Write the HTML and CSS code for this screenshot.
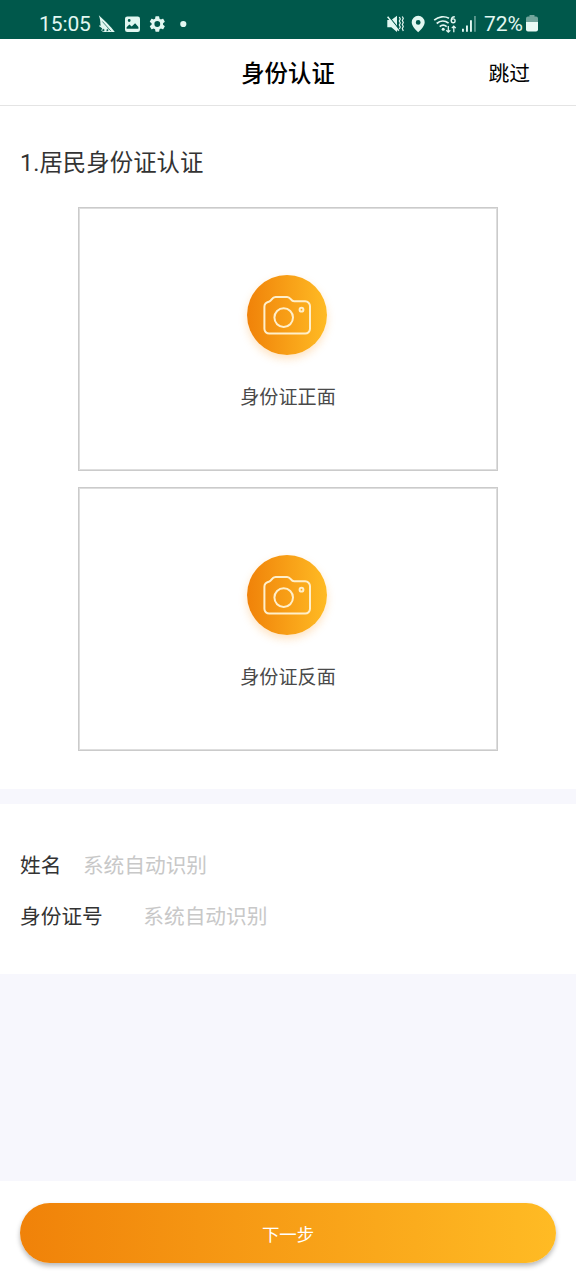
FILE: index.html
```html
<!DOCTYPE html>
<html lang="zh-CN">
<head>
<meta charset="utf-8">
<meta name="viewport" content="width=device-width, initial-scale=1">
<title>身份认证</title>
<link rel="stylesheet" href="styles.css">
</head>
<body>
<div class="screen">
  <div class="status">
    <span class="clock">15:05</span>
    <svg class="icons-left" width="92" height="20" viewBox="98 14 92 20" fill="#e2f7f1">
      <path d="M98.800 15.200c1.300 3.600 1.700 6.200 1.600 9l1.600 4.400 2 3.400h10.800l-3.600-4.600-5.200-5.400z"/>
      <path d="M102.400 21.500l8.600 9.700" stroke="#00584b" stroke-width=".7"/>
      <path d="M99.500 25.600l3.600 2.400" stroke="#e2f7f1" stroke-width="1.400"/>
      <path d="M101.600 30.200c1-2 2.800-2 3.400 0-1.200 1.800-2.400 1.800-3.400 0zm4.400 0c1-2 2.600-1.600 2.800 0-.8 1.700-2.400 1.700-2.800 0z" fill="#00584b" stroke="#e2f7f1" stroke-width=".8"/>
      <path fill-rule="evenodd" d="M127.300 16.500h10.400a2.300 2.300 0 0 1 2.300 2.300v10.900a2.300 2.300 0 0 1-2.300 2.300h-10.400a2.300 2.300 0 0 1-2.300-2.300V18.800a2.300 2.300 0 0 1 2.300-2.300zM126.600 28.800h11.800v-1.900l-3.300-3.700-3.400 3.200-2.300-1.900-2.800 2.700zM129.200 19.100a1.400 1.400 0 1 0 0 2.800 1.400 1.400 0 0 0 0-2.800z"/>
      <g transform="translate(147.700 14.400) scale(.8)">
        <path d="M19.140 12.940c.04-.3.060-.61.060-.94s-.02-.64-.07-.94l2.030-1.580a.5.5 0 0 0 .12-.61l-1.920-3.320a.49.49 0 0 0-.59-.22l-2.390.96a7 7 0 0 0-1.620-.94l-.36-2.540a.48.48 0 0 0-.48-.41h-3.840a.47.47 0 0 0-.47.41l-.36 2.540c-.59.24-1.130.57-1.620.94l-2.390-.96a.47.47 0 0 0-.59.22L2.740 8.870a.47.47 0 0 0 .12.61l2.030 1.580a6 6 0 0 0 0 1.880l-2.030 1.580a.5.5 0 0 0-.12.61l1.920 3.320c.12.22.37.29.59.22l2.390-.96c.5.38 1.030.7 1.620.94l.36 2.540c.05.24.24.41.48.41h3.840c.24 0 .44-.17.47-.41l.36-2.540a7 7 0 0 0 1.620-.94l2.390.96c.22.080.47 0 .59-.22l1.920-3.320a.47.47 0 0 0-.12-.61zM12 15.600a3.600 3.600 0 1 1 0-7.200 3.600 3.600 0 0 1 0 7.200z"/>
      </g>
      <circle cx="183.300" cy="24" r="3.100"/>
    </svg>
    <svg class="icons-right" width="92" height="20" viewBox="386 14 92 20" fill="#e2f7f1">
      <path d="M387.300 20h4l5.700-4.300v16.200l-5.700-4.600h-4z"/>
      <path d="M388.600 16.200l10.600 13.200" stroke="#00584b" stroke-width="1.200"/>
      <path d="M387.600 16.800l11.200 14" stroke="#e2f7f1" stroke-width="1.500"/>
      <path d="M399.300 17l1 2-1 2 1 2-1 2 1 2-1 2M402.300 16.500l1 2-1 2 1 2-1 2 1 2-1 2 1 2.500" fill="none" stroke="#e2f7f1" stroke-width="1.200"/>
      <path fill-rule="evenodd" d="M418.200 15.800a6.500 6.500 0 0 0-6.500 6.500c0 4.500 6.500 10 6.500 10s6.500-5.500 6.500-10a6.500 6.500 0 0 0-6.500-6.500zm0 4.200a2.400 2.400 0 1 1 0 4.800 2.400 2.400 0 0 1 0-4.800z"/>
      <g fill="none" stroke="#e2f7f1" stroke-width="1.700">
        <path d="M434.200 20.200c4.500-4 10.500-4.400 14.800-1.900M436.700 23.500c3.600-3.200 8.300-3.200 11.900-.3M439.700 26.600c2.200-1.900 4.800-1.900 7 0"/>
        <path d="M448.300 26v6.200m-2-2 2 2 2-2M453.800 32.300v-6.200m-2 2 2-2 2 2" stroke-width="1.300"/>
        <path d="M454.800 16.700c-2.500 0-3.500 1.500-3.500 3.700" stroke-width="1.400"/>
        <circle cx="453.200" cy="20.800" r="1.900" stroke-width="1.400"/>
      </g>
      <circle cx="443.200" cy="29.300" r="1.500"/>
      <path d="M462 28.800h1.900v3H462zM466 25.500h1.900v6.300H466zM470 20.300h1.900v11.500H470z"/>
      <path opacity=".4" d="M474 16h1.900v15.800H474z"/>
    </svg>
    <span class="percent">72%</span>
    <svg class="battery" width="12" height="18" viewBox="0 0 12 18">
      <path fill="#72a59c" d="M3.500 0h5v1.500H10a2 2 0 0 1 2 2V8H0V3.500a2 2 0 0 1 2-2h1.500z"/>
      <path fill="#e9faf5" d="M0 7h12v7.500a2 2 0 0 1-2 2H2a2 2 0 0 1-2-2z"/>
    </svg>
  </div>
  <header class="header">
    <h1 class="title">身份认证</h1>
    <a class="skip">跳过</a>
  </header>
  <main class="upload">
    <h2 class="heading">1.居民身份证认证</h2>
    <div class="card">
      <span class="camera">
        <svg width="80" height="80" viewBox="0 0 80 80" fill="none" stroke="#ffefca" stroke-width="2">
          <path d="M22.300 26.500C25 25.500 24.800 22 28.500 22h11.700c3.800 0 3.300 4.300 7 4.300h11a4.800 4.800 0 0 1 4.800 4.800v22.700a4.800 4.800 0 0 1-4.800 4.800h-36a4.800 4.800 0 0 1-4.800-4.800V31.700c0-2.900 1.700-4.400 4.900-5.200z"/>
          <circle cx="36.700" cy="42.600" r="9.300"/>
          <circle cx="54.500" cy="34.700" r="1.900"/>
        </svg>
      </span>
      <span class="caption">身份证正面</span>
    </div>
    <div class="card">
      <span class="camera">
        <svg width="80" height="80" viewBox="0 0 80 80" fill="none" stroke="#ffefca" stroke-width="2">
          <path d="M22.300 26.500C25 25.500 24.800 22 28.500 22h11.700c3.800 0 3.300 4.300 7 4.300h11a4.800 4.800 0 0 1 4.800 4.800v22.700a4.800 4.800 0 0 1-4.800 4.800h-36a4.800 4.800 0 0 1-4.800-4.800V31.700c0-2.900 1.700-4.400 4.900-5.200z"/>
          <circle cx="36.700" cy="42.600" r="9.300"/>
          <circle cx="54.500" cy="34.700" r="1.900"/>
        </svg>
      </span>
      <span class="caption">身份证反面</span>
    </div>
  </main>
  <section class="form">
    <div class="row"><span class="label">姓名</span><span class="placeholder">系统自动识别</span></div>
    <div class="row row-id"><span class="label">身份证号</span><span class="placeholder">系统自动识别</span></div>
  </section>
  <footer class="footer">
    <button class="next">下一步</button>
  </footer>
</div>
</body>
</html>
```

FILE: styles.css
```css
* { box-sizing: border-box; }
body {
  margin: 0;
  font-family: Roboto, "Noto Sans CJK SC", sans-serif;
  color: #333;
}
.screen {
  height: 1280px;
  display: flex;
  flex-direction: column;
  background: #f7f7fd;
  overflow: hidden;
}
.status {
  height: 39px;
  flex: none;
  display: flex;
  align-items: center;
  padding: 9px 38px 0 39px;
  background: #00584b;
  color: #e2f7f1;
  font-size: 21px;
  line-height: 30px;
}
.clock { width: 59px; letter-spacing: -0.1px; }
.icons-right { margin-left: auto; }
.percent { margin-left: 6px; width: 42px; }
.battery { flex: none; }
.header {
  height: 67px;
  flex: none;
  display: grid;
  grid-template-columns: 1fr auto 1fr;
  align-items: center;
  padding: 4px 46px 0;
  background: #fff;
  border-bottom: 1px solid #e4e4e4;
  color: #000;
}
.title {
  grid-column: 2;
  margin: 0;
  font-size: 23.4px;
  font-weight: 500;
  line-height: 34px;
}
.skip { justify-self: end; font-size: 20.8px; line-height: 30px; }
.upload {
  height: 683px;
  flex: none;
  display: flex;
  flex-direction: column;
  align-items: center;
  background: #fff;
  padding-top: 40px;
}
.heading {
  align-self: flex-start;
  margin: 0 0 27px 20px;
  font-size: 23.4px;
  font-weight: 400;
  line-height: 34px;
  letter-spacing: 0.05px;
}
.card {
  width: 420px;
  height: 264px;
  flex: none;
  margin-bottom: 16.4px;
  border: 1px solid #cbcbcb;
  box-shadow: inset 0 0 0 1px #dedede;
  display: flex;
  flex-direction: column;
  align-items: center;
  padding-top: 67px;
}
.camera {
  width: 80px;
  height: 80px;
  margin-right: 2px;
  border-radius: 50%;
  background: linear-gradient(90deg, #f08209, #ffbb24);
  box-shadow: 0 4px 8px rgba(250, 155, 35, .28);
}
.caption {
  margin-top: 29px;
  font-size: 19.1px;
  line-height: 28px;
  color: #4a4a4a;
}
.form {
  height: 170px;
  flex: none;
  margin-top: 15px;
  padding: 47px 20px 0;
  background: #fff;
  font-size: 20.7px;
  line-height: 31px;
}
.row { display: flex; gap: 21.5px; margin-bottom: 20px; }
.row-id { gap: 40.5px; }
.placeholder { color: #c8c8c8; }
.footer {
  height: 99px;
  flex: none;
  margin-top: auto;
  padding: 22px 20px 17px;
  background: #fff;
}
.next {
  display: block;
  width: 100%;
  height: 60px;
  padding: 0;
  border: 0;
  border-radius: 30px;
  background: linear-gradient(90deg, #f08209, #ffbb24);
  box-shadow: 0 3px 5px rgba(0, 0, 0, .28);
  color: #fff;
  font-family: inherit;
  font-size: 17.4px;
}
```
